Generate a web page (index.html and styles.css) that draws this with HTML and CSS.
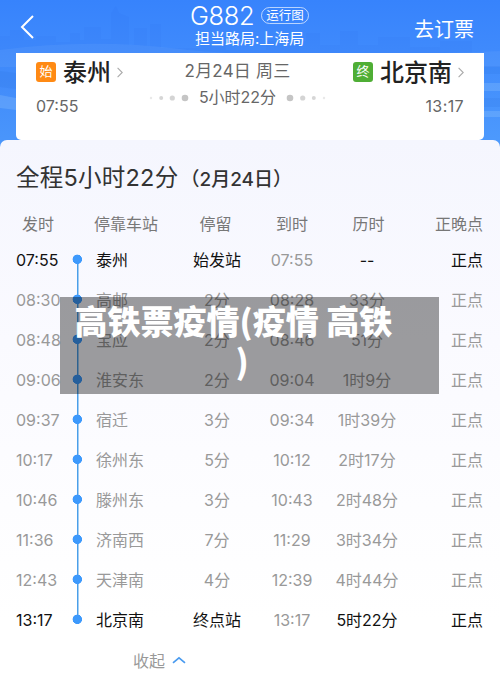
FILE: index.html
```
<!DOCTYPE html>
<html lang="zh-CN">
<head>
    <meta charset="UTF-8">
    <meta name="viewport" content="width=device-width, initial-scale=1.0">
    <title>G882 时刻表</title>
    <link rel="stylesheet" href="styles.css">
</head>
<body>
    <div class="page">
        <!-- 城市剪影背景 -->
        <svg class="skyline" width="500" height="150" viewBox="0 0 500 150">
            <path d="M0 36h10v-6h14v10h12v-4h20v6h14v-9h10v7h4V27h17v12h10V13l5-7 3 7 10 4v28h5V28h13v18h3V24h11v24h40v-6h25v8h40v-9h40v-8h14v12h20V31h18v14h20v-8h32v10h30v-6h32v109H0z" fill="#2467dc" opacity=".07"/>
            <path d="M0 50q90-12 180-1t320 2v16H0z" fill="#8dbcff" opacity=".12"/>
            <path d="M0 71l16 2v16l-16-2zM484 66h16v8h-16zM484 98h16v9h-16z" fill="#2467dc" opacity=".14"/>
            <path d="M0 95l16 3v12l-16-2zM484 83h16v8h-16zM484 111h16v6h-16z" fill="#b5daff" opacity=".2"/>
        </svg>

        <header class="header">
            <svg class="back" width="16" height="26" viewBox="0 0 16 26">
                <path d="M14 2L3 13l11 11" fill="none" stroke="#fff" stroke-width="2"/>
            </svg>
            <div class="train">
                <div class="train-top">
                    <span class="train-no">G882</span>
                    <span class="map-btn">运行图</span>
                </div>
                <div class="bureau">担当路局:上海局</div>
            </div>
            <a class="book">去订票</a>
        </header>

        <section class="card">
            <div class="stop">
                <div class="stop-name">
                    <span class="badge start">始</span>
                    <b>泰州</b>
                    <svg class="arrow" width="6" height="11" viewBox="0 0 6 11"><path d="M.6 .8L5.2 5.5.6 10.2" fill="none" stroke="#aaa" stroke-width="1.1"/></svg>
                </div>
                <div class="stop-time">07:55</div>
            </div>
            <div class="middle">
                <div class="date">2月24日 周三</div>
                <div class="total">
                    <svg width="40" height="8" viewBox="0 0 40 8" fill="#c5c5c5">
                        <circle cx="2" cy="4" r="1.2" opacity=".4"/><circle cx="12.2" cy="4" r="2" opacity=".7"/><circle cx="23.3" cy="4" r="2.6" opacity=".75"/><circle cx="36" cy="4" r="3.3"/>
                    </svg>
                    <span>5小时22分</span>
                    <svg width="40" height="8" viewBox="0 0 40 8" fill="#c5c5c5">
                        <circle cx="4" cy="4" r="3.3"/><circle cx="16.7" cy="4" r="2.6" opacity=".75"/><circle cx="27.8" cy="4" r="2" opacity=".7"/><circle cx="38" cy="4" r="1.2" opacity=".4"/>
                    </svg>
                </div>
            </div>
            <div class="stop end-stop">
                <div class="stop-name">
                    <span class="badge end">终</span>
                    <b>北京南</b>
                    <svg class="arrow" width="6" height="11" viewBox="0 0 6 11"><path d="M.6 .8L5.2 5.5.6 10.2" fill="none" stroke="#aaa" stroke-width="1.1"/></svg>
                </div>
                <div class="stop-time">13:17</div>
            </div>
        </section>

        <main class="panel">
            <h2 class="title">全程5小时22分<span class="title-date">（2月24日）</span></h2>

            <div class="row head">
                <span class="time">发时</span><i></i><span class="name">停靠车站</span><span class="stay">停留</span><span>到时</span><span class="lasts">历时</span><span class="status">正晚点</span>
            </div>
            <div class="row strong first">
                <span class="time">07:55</span><i class="dot"></i><span class="name">泰州</span><span>始发站</span><span class="arrive">07:55</span><span>--</span><span class="status">正点</span>
            </div>
            <div class="row">
                <span class="time">08:30</span><i class="dot"></i><span class="name">高邮</span><span>2分</span><span>08:28</span><span>33分</span><span class="status">正点</span>
            </div>
            <div class="row">
                <span class="time">08:48</span><i class="dot"></i><span class="name">宝应</span><span>2分</span><span>08:46</span><span>51分</span><span class="status">正点</span>
            </div>
            <div class="row">
                <span class="time">09:06</span><i class="dot"></i><span class="name">淮安东</span><span>2分</span><span>09:04</span><span>1时9分</span><span class="status">正点</span>
            </div>
            <div class="row">
                <span class="time">09:37</span><i class="dot"></i><span class="name">宿迁</span><span>3分</span><span>09:34</span><span>1时39分</span><span class="status">正点</span>
            </div>
            <div class="row">
                <span class="time">10:17</span><i class="dot"></i><span class="name">徐州东</span><span>5分</span><span>10:12</span><span>2时17分</span><span class="status">正点</span>
            </div>
            <div class="row">
                <span class="time">10:46</span><i class="dot"></i><span class="name">滕州东</span><span>3分</span><span>10:43</span><span>2时48分</span><span class="status">正点</span>
            </div>
            <div class="row">
                <span class="time">11:36</span><i class="dot"></i><span class="name">济南西</span><span>7分</span><span>11:29</span><span>3时34分</span><span class="status">正点</span>
            </div>
            <div class="row">
                <span class="time">12:43</span><i class="dot"></i><span class="name">天津南</span><span>4分</span><span>12:39</span><span>4时44分</span><span class="status">正点</span>
            </div>
            <div class="row strong last">
                <span class="time">13:17</span><i class="dot"></i><span class="name">北京南</span><span>终点站</span><span class="arrive">13:17</span><span>5时22分</span><span class="status">正点</span>
            </div>

            <div class="fold">
                收起
                <svg width="14" height="8" viewBox="0 0 14 8"><path d="M1 6.8l6-5 6 5" fill="none" stroke="#4a9bef" stroke-width="1.7"/></svg>
            </div>
        </main>

        <div class="caption">高铁票疫情(疫情 高铁<br><span class="caption-end">)</span></div>
    </div>
</body>
</html>
```
FILE: styles.css
```
* {
    box-sizing: border-box;
}

body {
    margin: 0;
    font-family: Inter, "Noto Sans CJK SC", sans-serif;
    font-size: 16px;
}

.page {
    position: relative;
    width: 500px;
    height: 691px;
    overflow: hidden;
    background: linear-gradient(#3783fc, #3f8afc 50px, #4e9bfd 150px);
}

.skyline {
    position: absolute;
    top: 0;
    left: 0;
}

/* Cabecera */
.header {
    position: relative;
    display: flex;
    height: 53px;
    padding: 0 26px 0 19px;
    color: #fff;
}

.back {
    margin-top: 14px;
}

.train {
    width: 120px;
    margin-left: 155px;
}

.train-top {
    display: flex;
    align-items: center;
    gap: 7px;
    height: 31px;
}

.train-no {
    font-size: 25.5px;
    font-weight: 350;
    width: 64px;
    letter-spacing: -0.4px;
}

.map-btn {
    flex: none;
    width: 48px;
    height: 17px;
    line-height: 15px;
    border: 1px solid rgba(255, 255, 255, 0.65);
    border-radius: 9px;
    font-size: 12.5px;
    text-align: center;
}

.bureau {
    margin-left: 5px;
    font-size: 15px;
    line-height: 15px;
    white-space: nowrap;
}

.book {
    margin-left: auto;
    font-size: 20px;
    line-height: 60px;
}

/* Tarjeta de origen y destino */
.card {
    position: relative;
    display: flex;
    justify-content: space-between;
    height: 87px;
    margin: 0 16px;
    padding: 0 20px;
    background: #fff;
    border-radius: 0 0 5px 5px;
    color: #666;
}

.stop-name {
    display: flex;
    align-items: center;
    height: 38px;
}

.stop-name b {
    margin: -4px 6px 0 7px;
    color: #222;
    font-size: 24px;
    font-weight: 500;
}

.badge {
    width: 20px;
    height: 20px;
    border-radius: 3px;
    color: #fff;
    font-size: 13px;
    line-height: 19px;
    text-align: center;
}

.start {
    background: #ff8a14;
}

.end {
    background: #4fae35;
}

.stop-time {
    font-size: 16px;
    line-height: 30px;
}

.end-stop .stop-time {
    text-align: right;
}

.end-stop .stop-time {
    letter-spacing: 0.4px;
}

.middle {
    display: flex;
    flex-direction: column;
    align-items: center;
}

.date {
    margin-right: 1px;
    font-size: 17px;
    letter-spacing: 0.2px;
    line-height: 36px;
}

.total {
    display: flex;
    align-items: center;
    gap: 10px;
    margin-right: 1px;
    font-size: 16px;
    line-height: 17px;
}

/* Tabla de paradas */
.panel {
    position: relative;
    height: 551px;
    padding: 18px 17px 0 16px;
    background: linear-gradient(#f5f6fe, #fafaff 200px, #fff 480px);
    border-radius: 7px 7px 0 0;
}

.title {
    margin: 0;
    height: 40px;
    color: #333;
    font-size: 23.5px;
    font-weight: 400;
    letter-spacing: 0.25px;
    line-height: 40px;
}

.title-date {
    margin-left: 2px;
    font-size: 19px;
    font-weight: 500;
    letter-spacing: 0;
}

.row {
    display: grid;
    grid-template-columns: 54px 14px 12px 84px 74px 76px 74px 79px;
    height: 40px;
    color: #999;
    line-height: 40px;
    text-align: center;
    white-space: nowrap;
}

.row .time,
.row .name {
    text-align: left;
}

.row .name {
    grid-column: 4;
}

.row .status {
    text-align: right;
}

.head {
    margin: 6px 0 -4px;
    color: #777;
}

.head .time {
    padding-left: 6px;
}

.head .name {
    margin-left: -2px;
}

.head .stay {
    margin-right: 3px;
}

.head .lasts {
    padding-left: 3px;
}

.strong {
    color: #111;
}

.strong .arrive {
    color: #999;
}

.dot {
    background:
        radial-gradient(circle at 7.3px 19.3px, #3d99fc 4.4px, rgba(61, 153, 252, 0) 5px),
        linear-gradient(#4a9fe9, #4a9fe9) 6.5px 0 / 1.5px 40px no-repeat;
}

.first .dot {
    background:
        radial-gradient(circle at 7.3px 19.3px, #3d99fc 4.4px, rgba(61, 153, 252, 0) 5px),
        linear-gradient(#4a9fe9, #4a9fe9) 6.5px 20px / 1.5px 20px no-repeat;
}

.last .dot {
    background:
        radial-gradient(circle at 7.3px 19.3px, #3d99fc 4.4px, rgba(61, 153, 252, 0) 5px),
        linear-gradient(#4a9fe9, #4a9fe9) 6.5px 0 / 1.5px 20px no-repeat;
}

.fold {
    display: flex;
    align-items: center;
    gap: 7px;
    height: 40px;
    padding-left: 117px;
    color: #999;
}

/* Rótulo superpuesto */
.caption {
    position: absolute;
    top: 297px;
    left: 60px;
    width: 379px;
    height: 97px;
    padding: 3px 32px 0 0;
    background: rgba(0, 0, 0, 0.38);
    color: #fff;
    font-family: "Noto Sans CJK SC", sans-serif;
    font-size: 33px;
    font-weight: 900;
    line-height: 40px;
    text-align: center;
    white-space: nowrap;
}

.caption-end {
    padding-left: 17px;
}
```
